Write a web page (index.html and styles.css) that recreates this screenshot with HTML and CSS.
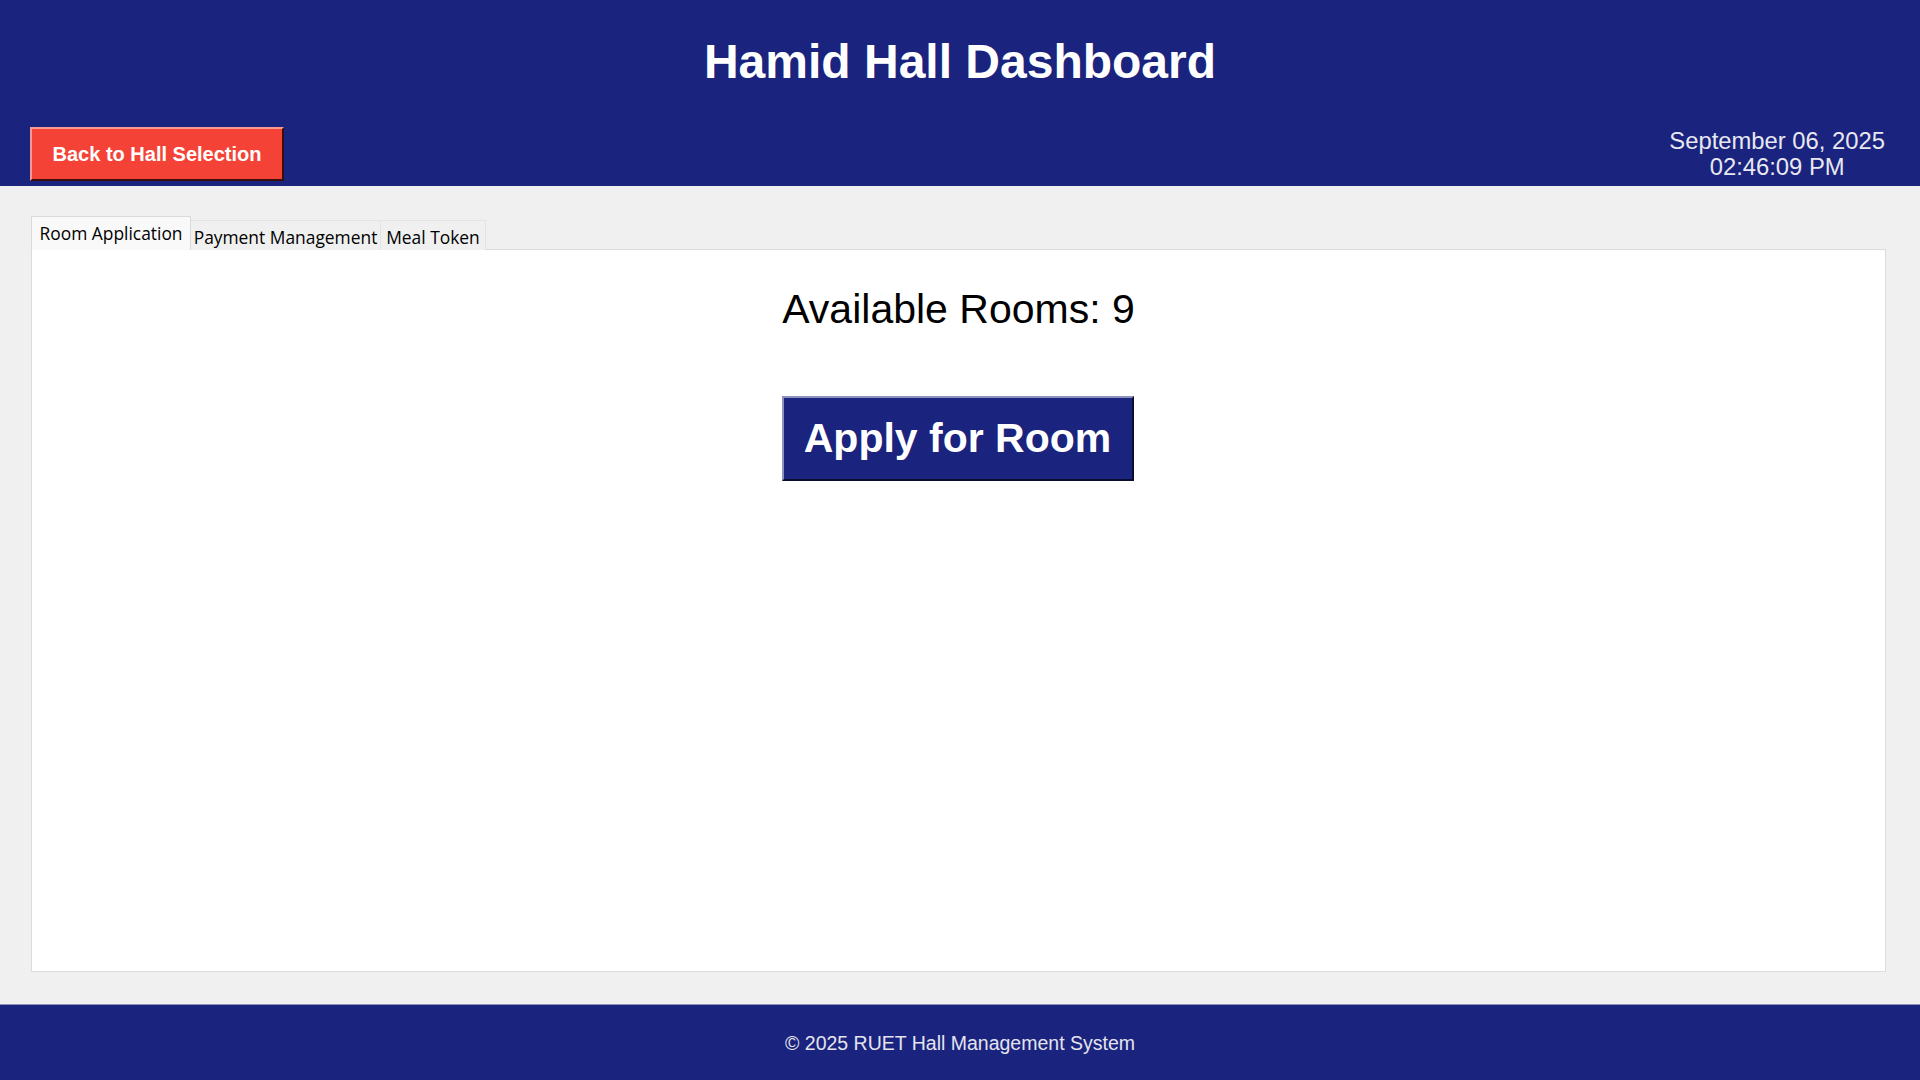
FILE: index.html
```html
<!DOCTYPE html>
<html lang="en">
<head>
<meta charset="utf-8">
<title>Hamid Hall Dashboard</title>
<link rel="stylesheet" href="styles.css">
</head>
<body>
<div class="app">
  <header class="header">
    <h1 class="title">Hamid Hall Dashboard</h1>
    <div class="header-row">
      <button class="back-btn">Back to Hall Selection</button>
      <div class="datetime">
        <div>September 06, 2025</div>
        <div>02:46:09 PM</div>
      </div>
    </div>
  </header>
  <main class="main">
    <div class="tabs">
      <div class="tab tab-active">Room Application</div>
      <div class="tab tab-pay">Payment Management</div>
      <div class="tab tab-meal">Meal Token</div>
    </div>
    <section class="panel">
      <div class="rooms-label">Available Rooms: 9</div>
      <button class="apply-btn">Apply for Room</button>
    </section>
  </main>
  <footer class="footer">© 2025 RUET Hall Management System</footer>
</div>
</body>
</html>
```
FILE: styles.css
```css
* { box-sizing: border-box; }
html, body { margin: 0; padding: 0; }
body {
  width: 1920px;
  height: 1080px;
  overflow: hidden;
  font-family: "Liberation Sans", Arial, sans-serif;
  background: #f0f0f0;
}
.app {
  display: flex;
  flex-direction: column;
  height: 1080px;
}
.header {
  background: #1a237e;
  height: 186px;
  padding: 34px 35px 5px 30px;
  display: flex;
  flex-direction: column;
}
.title {
  margin: 0;
  color: #ffffff;
  font-size: 48px;
  font-weight: bold;
  text-align: center;
  line-height: 56px;
  padding-left: 5px;
}
.header-row {
  margin-top: auto;
  display: flex;
  justify-content: space-between;
  align-items: flex-end;
}
.back-btn {
  width: 254px;
  height: 54px;
  background: #f44336;
  color: #ffffff;
  font-family: "Liberation Sans", Arial, sans-serif;
  font-size: 20px;
  font-weight: bold;
  border-style: solid;
  border-width: 2px;
  border-color: #f99a92 #3b0e0b #3b0e0b #f99a92;
  padding: 0;
  cursor: pointer;
}
.datetime {
  color: #e8e8f0;
  font-size: 23.8px;
  line-height: 26px;
  text-align: center;
  padding-bottom: 1px;
}
.main {
  flex: 1;
  padding: 31px 34px 32px 31px;
  display: flex;
  flex-direction: column;
}
.tabs {
  display: flex;
  align-items: flex-end;
  height: 33px;
  font-family: "Open Sans", "Noto Sans", sans-serif;
  font-size: 17.4px;
  color: #000;
  position: relative;
  z-index: 1;
  margin-bottom: -1px;
}
.tab {
  height: 30px;
  line-height: 32px;
  text-align: center;
  background: #f0f0f0;
  border: 1px solid #e3e3e3;
  border-bottom: none;
  white-space: nowrap;
}
.tab-active {
  width: 160px;
  height: 34px;
  line-height: 33px;
  background: #f9f9f9;
  border-color: #dadada;
}
.tab-pay { width: 190px; border-left: none; }
.tab-meal { width: 105px; border-left: none; }
.panel {
  flex: 1;
  background: #ffffff;
  border: 1px solid #dcdcdc;
  display: flex;
  flex-direction: column;
  align-items: center;
  padding-top: 36px;
}
.rooms-label {
  font-size: 41px;
  line-height: 47px;
  color: #000;
}
.apply-btn {
  margin-top: 63px;
  margin-right: 2px;
  width: 352px;
  height: 85px;
  background: #1a237e;
  color: #ffffff;
  font-family: "Liberation Sans", Arial, sans-serif;
  font-size: 41px;
  font-weight: bold;
  border-style: solid;
  border-width: 2px;
  border-color: #8d91bf #0a0d2e #0a0d2e #8d91bf;
  padding: 0;
  cursor: pointer;
}
.footer {
  height: 76px;
  background: #1a237e;
  border-top: 1px solid #8c91c0;
  color: #e4e4ee;
  font-size: 19.5px;
  display: flex;
  align-items: center;
  justify-content: center;
  padding-top: 1px;
}
```
